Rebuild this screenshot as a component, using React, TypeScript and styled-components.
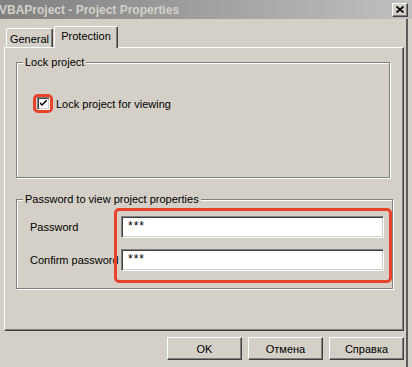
import React from 'react'
import styled, { createGlobalStyle, css } from 'styled-components'

const GlobalStyle = createGlobalStyle`
  html, body {
    margin: 0;
    background: #d4d0c8;
  }
  body {
    font-family: 'Liberation Sans', Arial, sans-serif;
    font-size: 11px;
    color: #000;
  }
`

const raised = css`
  border-top: 1px solid #fff;
  border-left: 1px solid #fff;
  border-right: 1px solid #404040;
  border-bottom: 1px solid #404040;
  box-shadow: inset -1px -1px 0 #808080;
`

const sunken = css`
  border-top: 1px solid #808080;
  border-left: 1px solid #808080;
  border-right: 1px solid #fff;
  border-bottom: 1px solid #fff;
  box-shadow: inset 1px 1px 0 #404040, inset -1px -1px 0 #d4d0c8;
`

const Window = styled.div`
  width: 412px;
  height: 367px;
  display: flex;
  flex-direction: column;
  overflow: hidden;
`

const TitleBar = styled.div`
  height: 19px;
  flex: none;
  display: flex;
  align-items: center;
  justify-content: space-between;
  padding-right: 4px;
  background: linear-gradient(to right, #808080, #c0c0c0);
`

const Title = styled.span`
  margin-left: -1px;
  font-weight: bold;
  font-size: 12px;
  color: #d4d0c8;
  white-space: nowrap;
`

const CloseButton = styled.div`
  width: 16px;
  height: 14px;
  box-sizing: border-box;
  background: #d4d0c8;
  display: flex;
  align-items: center;
  justify-content: center;
  ${raised}
`

const Body = styled.div`
  flex: 1;
  width: 406px;
  border-right: 2px solid #5c5c5c;
  display: flex;
  flex-direction: column;
`

const TabStrip = styled.div`
  height: 21px;
  margin-top: 7px;
  display: flex;
  align-items: flex-end;
  position: relative;
  z-index: 1;
`

const Tab = styled.div<{ $active?: boolean; $width: number }>`
  box-sizing: border-box;
  width: ${(p) => p.$width}px;
  height: ${(p) => (p.$active ? 22 : 19)}px;
  margin-left: ${(p) => (p.$active ? 1 : 6)}px;
  margin-bottom: ${(p) => (p.$active ? -1 : 0)}px;
  background: #d4d0c8;
  border-top: 1px solid #fff;
  border-left: 1px solid #fff;
  border-right: 1px solid #404040;
  border-radius: 2px 2px 0 0;
  box-shadow: inset -1px 0 0 #808080;
  display: flex;
  justify-content: center;
  padding-top: ${(p) => (p.$active ? 3 : 4)}px;
  white-space: nowrap;
`

const Panel = styled.div`
  box-sizing: border-box;
  width: 400px;
  height: 284px;
  margin-left: 4px;
  padding: 8px 0 0 11px;
  display: flex;
  flex-direction: column;
  gap: 15px;
  ${raised}
`

const GroupBox = styled.fieldset<{ $height: number }>`
  box-sizing: border-box;
  width: 374px;
  height: ${(p) => p.$height}px;
  margin: 0;
  padding: 0;
  border: 1px solid #808080;
  box-shadow: inset 1px 1px 0 #fff, 1px 1px 0 #fff;
`

const Legend = styled.legend`
  margin-left: 6px;
  padding: 0 2px;
  line-height: 13px;
  background: #d4d0c8;
`

const CheckRow = styled.label`
  margin: 25px 0 0 16px;
  display: flex;
  align-items: center;
  gap: 3px;
`

const Highlight = styled.div`
  position: relative;
  border: 3px solid #e8412c;
  border-radius: 5px;
`

const CheckHighlight = styled(Highlight)`
  padding-left: 1px;
  display: flex;
`

const CheckBox = styled.span`
  width: 13px;
  height: 13px;
  box-sizing: border-box;
  background: #fff;
  display: flex;
  align-items: center;
  justify-content: center;
  ${sunken}
`

const FieldsRow = styled.div`
  margin: 2px 0 0 13px;
  display: flex;
`

const Labels = styled.div`
  width: 84px;
  padding-top: 8px;
  display: flex;
  flex-direction: column;
  gap: 11px;
`

const FieldLabel = styled.div`
  height: 22px;
  line-height: 22px;
  white-space: nowrap;
`

const Inputs = styled(Highlight)`
  padding: 5px 5px 9px 4px;
  display: flex;
  flex-direction: column;
  gap: 11px;
`

const TextBox = styled.div`
  width: 263px;
  height: 22px;
  box-sizing: border-box;
  background: #fff;
  padding: 2px 0 0 6px;
  font-size: 12px;
  letter-spacing: 1px;
  ${sunken}
`

const ButtonRow = styled.div`
  margin-top: 6px;
  padding-right: 2px;
  display: flex;
  justify-content: flex-end;
  gap: 6px;
`

const Button = styled.div`
  width: 75px;
  height: 23px;
  box-sizing: border-box;
  display: flex;
  align-items: center;
  justify-content: center;
  ${raised}
`

const App = () => {
  return (
    <Window>
      <GlobalStyle />
      <TitleBar>
        <Title>VBAProject - Project Properties</Title>
        <CloseButton>
          <svg width="8" height="7" viewBox="0 0 8 7">
            <path d="M0.5 0.5 L7.5 6.5 M7.5 0.5 L0.5 6.5" stroke="#000" strokeWidth="1.8" />
          </svg>
        </CloseButton>
      </TitleBar>
      <Body>
        <TabStrip>
          <Tab $width={47}>General</Tab>
          <Tab $width={64} $active>
            Protection
          </Tab>
        </TabStrip>
        <Panel>
          <GroupBox $height={122}>
            <Legend>Lock project</Legend>
            <CheckRow>
              <CheckHighlight>
                <CheckBox>
                  <svg width="7" height="7" viewBox="0 0 7 7">
                    <path d="M0 2 L2 4 L7 -1 L7 1 L2 6 L0 4 Z" fill="#000" />
                  </svg>
                </CheckBox>
              </CheckHighlight>
              Lock project for viewing
            </CheckRow>
          </GroupBox>
          <GroupBox $height={96}>
            <Legend>Password to view project properties</Legend>
            <FieldsRow>
              <Labels>
                <FieldLabel>Password</FieldLabel>
                <FieldLabel>Confirm password</FieldLabel>
              </Labels>
              <Inputs>
                <TextBox>***</TextBox>
                <TextBox>***</TextBox>
              </Inputs>
            </FieldsRow>
          </GroupBox>
        </Panel>
        <ButtonRow>
          <Button>OK</Button>
          <Button>Отмена</Button>
          <Button>Справка</Button>
        </ButtonRow>
      </Body>
    </Window>
  )
}

export default App
